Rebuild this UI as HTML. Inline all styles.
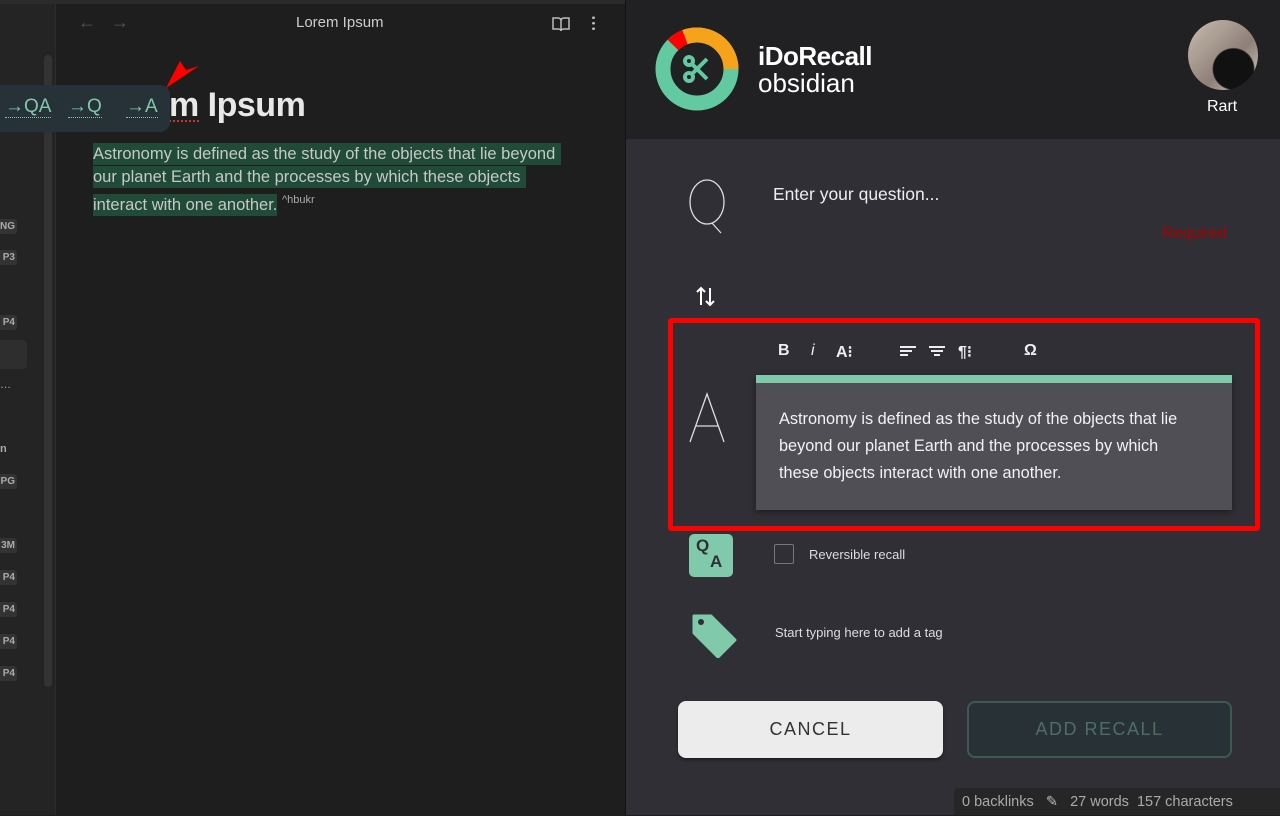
<!DOCTYPE html>
<html><head><meta charset="utf-8"><style>
*{box-sizing:border-box;margin:0;padding:0}
body{width:1280px;height:815px;overflow:hidden;background:#1e1e1e;font-family:"Liberation Sans",sans-serif;position:relative;color:#ddd}
.abs{position:absolute}
.tag{position:absolute;left:0;width:17px;height:15px;background:#333;border-radius:0 3px 3px 0;font-size:10px;font-weight:bold;color:#aaa;line-height:15px;text-align:right;padding-right:2px}
</style></head><body>
<div class="abs" style="left:0;top:0;width:56px;height:815px;background:#242424;border-right:1px solid #2c2c2c"></div>
<div class="abs" style="left:0;top:0;width:625px;height:4px;background:#2b2b2b"></div>
<div class="abs" style="left:44px;top:55px;width:8px;height:632px;background:#333;border-radius:4px"></div>
<div class="tag" style="top:219px">NG</div>
<div class="tag" style="top:250px">P3</div>
<div class="tag" style="top:315px">P4</div>
<div class="abs" style="left:0;top:340px;width:27px;height:29px;background:#2e2e2e;border-radius:0 4px 4px 0"></div>
<div class="abs" style="left:0;top:379px;font-size:11px;color:#aaa">…</div>
<div class="abs" style="left:0;top:443px;font-size:11px;color:#aaa;font-weight:bold">n</div>
<div class="tag" style="top:474px">PG</div>
<div class="tag" style="top:538px">3M</div>
<div class="tag" style="top:570px">P4</div>
<div class="tag" style="top:602px">P4</div>
<div class="tag" style="top:634px">P4</div>
<div class="tag" style="top:666px">P4</div>

<div class="abs" style="left:78px;top:12px;font-size:18px;color:#555">←</div>
<div class="abs" style="left:111px;top:12px;font-size:18px;color:#555">→</div>
<div class="abs" style="left:296px;top:14px;font-size:15px;color:#ccc">Lorem Ipsum</div>
<svg class="abs" style="left:551px;top:15px" width="20" height="18" viewBox="0 0 20 18"><path d="M2 3h5c2 0 3 1 3 3v10c0-1-1-2-3-2H2zM18 3h-5c-2 0-3 1-3 3v10c0-1 1-2 3-2h5z" fill="none" stroke="#bbb" stroke-width="1.5"/></svg>
<div class="abs" style="left:592px;top:15px;width:3px;height:16px;background:radial-gradient(circle,#bbb 1.3px,transparent 1.5px) 0 0/3px 5.5px"></div>

<div class="abs" style="left:169px;top:86px;font-size:34px;font-weight:bold;color:#e8e8e8;letter-spacing:-0.5px;white-space:nowrap">m Ipsum</div>
<div class="abs" style="left:169px;top:120px;width:30px;height:2px;border-bottom:2px dotted #c33"></div>
<div class="abs" style="left:0;top:85px;width:170px;height:47px;background:#263238;border-radius:0 10px 10px 0;font-size:19px;color:#7fc8a9">
<span class="abs" style="left:5px;top:12px;border-bottom:1px dotted #7fc8a9;line-height:20px">→QA</span>
<span class="abs" style="left:68px;top:12px;border-bottom:1px dotted #7fc8a9;line-height:20px">→Q</span>
<span class="abs" style="left:126px;top:12px;border-bottom:1px dotted #7fc8a9;line-height:20px">→A</span>
</div>
<svg class="abs" style="left:164px;top:58px" width="38" height="32"><polygon points="2,30 16,3 22,12 35,8" fill="#f00"/></svg>
<div class="abs" style="left:93px;top:143px;width:540px;font-size:16.5px;line-height:23px;color:#c8c8c8;white-space:nowrap">
<span style="background:#1f4b38;padding:2px 6px 2px 0">Astronomy is defined as the study of the objects that lie beyond</span><br><span style="background:#1f4b38;padding:2px 6px 2px 0">our planet Earth and the processes by which these objects</span><br><span style="background:#1f4b38;padding:2px 0">interact with one another.</span> <sup style="font-size:11px;color:#aaa">^hbukr</sup></div>

<div class="abs" style="left:625px;top:0;width:655px;height:815px;background:#2f2f35;border-left:1px solid #111"></div>
<div class="abs" style="left:626px;top:0;width:654px;height:139px;background:#212123"></div>
<svg class="abs" style="left:655px;top:27px" width="84" height="84" viewBox="0 0 84 84">
<circle cx="42" cy="42" r="34" fill="none" stroke="#63c9a0" stroke-width="15"/>
<path d="M42 8A34 34 0 0 1 76 42" fill="none" stroke="#f7a21b" stroke-width="15"/>
<path d="M18 18A34 34 0 0 1 30 10" fill="none" stroke="#f00" stroke-width="15"/>
<path d="M30 10A34 34 0 0 1 42 8" fill="none" stroke="#f7a21b" stroke-width="15"/>
<circle cx="42" cy="42" r="26" fill="#212123"/>
<g stroke="#63c9a0" stroke-width="4" fill="none"><circle cx="34" cy="34" r="4"/><circle cx="34" cy="50" r="4"/><path d="M37 37L52 52M37 47L52 32"/></g>
</svg>
<div class="abs" style="left:758px;top:41px;font-size:26px;font-weight:bold;color:#fff;letter-spacing:-0.5px">iDoRecall</div>
<div class="abs" style="left:758px;top:68px;font-size:26px;color:#fff">obsidian</div>
<div class="abs" style="left:1188px;top:20px;width:70px;height:70px;border-radius:50%;background:radial-gradient(circle at 65% 70%,#111 30%,transparent 32%),linear-gradient(135deg,#c9bfb0,#8e7f78 60%,#d8cfc0)"></div>
<div class="abs" style="left:1207px;top:98px;font-size:16px;color:#fff">Rart</div>

<svg class="abs" style="left:688px;top:178px" width="42" height="56"><ellipse cx="19" cy="24" rx="17" ry="22" fill="none" stroke="#ddd" stroke-width="1.3"/><line x1="24" y1="45" x2="33" y2="55" stroke="#ddd" stroke-width="1.3"/></svg>
<div class="abs" style="left:773px;top:184px;font-size:17.5px;color:#eee">Enter your question...</div>
<div class="abs" style="left:1162px;top:225px;font-size:16px;color:#a00">Required</div>
<svg class="abs" style="left:696px;top:285px" width="20" height="22"><path d="M5 20V3M1 7l4-4 4 4M14 3v17M10 16l4 4 4-4" fill="none" stroke="#fff" stroke-width="2"/></svg>

<div class="abs" style="left:668px;top:318px;width:592px;height:213px;border:5px solid #f00;border-radius:3px"></div>
<svg class="abs" style="left:688px;top:392px" width="40" height="52"><path d="M2 50L19 2L36 50M8 34H30" fill="none" stroke="#ddd" stroke-width="1.3"/></svg>
<div class="abs" style="left:778px;top:342px;font-size:16px;color:#eee;font-weight:bold">B</div>
<div class="abs" style="left:811px;top:342px;font-size:16px;color:#eee;font-style:italic">i</div>
<div class="abs" style="left:836px;top:342px;font-size:16px;color:#eee;font-weight:bold">A⁝</div>
<svg class="abs" style="left:899px;top:345px" width="60" height="14"><path d="M1 2h16M1 6h12M1 10h8M30 2h16M32 6h12M35 10h6" stroke="#eee" stroke-width="2"/></svg>
<div class="abs" style="left:958px;top:342px;font-size:16px;color:#eee;font-weight:bold">¶⁝</div>
<div class="abs" style="left:1024px;top:342px;font-size:16px;color:#eee;font-weight:bold">Ω</div>
<div class="abs" style="left:756px;top:375px;width:476px;height:135px;background:#4f4f55;border-top:8px solid #80c9aa;box-shadow:0 2px 6px rgba(0,0,0,.4)"></div>
<div class="abs" style="left:779px;top:406px;width:450px;font-size:16.3px;line-height:27px;color:#f2f2f2;white-space:nowrap">Astronomy is defined as the study of the objects that lie<br>beyond our planet Earth and the processes by which<br>these objects interact with one another.</div>

<div class="abs" style="left:689px;top:534px;width:44px;height:43px;background:#80c9aa;border-radius:5px;font-weight:bold;color:#2f2f35;font-size:17px"><span class="abs" style="left:7px;top:2px">Q</span><span class="abs" style="left:21px;top:18px">A</span></div>
<div class="abs" style="left:774px;top:544px;width:20px;height:20px;border:1.5px solid #777;border-radius:2px"></div>
<div class="abs" style="left:809px;top:547px;font-size:13px;color:#ddd">Reversible recall</div>
<svg class="abs" style="left:690px;top:612px" width="48" height="46" viewBox="0 0 48 46"><path d="M4 4h17l24 24-17 17L4 21z" fill="#80c9aa" stroke="#80c9aa" stroke-width="3" stroke-linejoin="round"/><circle cx="11" cy="10" r="3" fill="#2f2f35"/></svg>
<div class="abs" style="left:775px;top:625px;font-size:13px;color:#ddd">Start typing here to add a tag</div>

<div class="abs" style="left:678px;top:701px;width:265px;height:57px;background:#ececec;border-radius:8px;text-align:center;line-height:57px;font-size:18px;letter-spacing:1.5px;color:#333;box-shadow:0 2px 3px rgba(0,0,0,.4)">CANCEL</div>
<div class="abs" style="left:967px;top:701px;width:265px;height:57px;background:#283136;border:2px solid #3d5a50;border-radius:8px;text-align:center;line-height:53px;font-size:18px;letter-spacing:1.5px;color:#4e6e63">ADD RECALL</div>

<div class="abs" style="left:954px;top:788px;width:326px;height:27px;background:#262626;border-radius:4px 0 0 0;font-size:14.5px;color:#aaa;line-height:28px;padding-left:8px;white-space:nowrap">0 backlinks &nbsp;&nbsp;<span style="color:#bbb">✎</span>&nbsp;&nbsp; 27 words &nbsp;157 characters</div>
</body></html>
